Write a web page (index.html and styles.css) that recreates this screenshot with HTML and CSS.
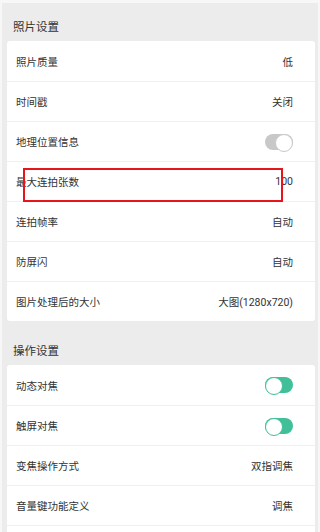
FILE: index.html
```html
<!DOCTYPE html>
<html lang="zh-CN">
<head>
  <meta charset="UTF-8" />
  <meta name="viewport" content="width=device-width, initial-scale=1.0" />
  <title>相机设置</title>
  <link rel="stylesheet" href="styles.css">
</head>
<body>
  <div class="page">
    <div class="group-title">照片设置</div>
    <div class="card">
      <div class="row"><span>照片质量</span><span class="value">低</span></div>
      <div class="row"><span>时间戳</span><span class="value">关闭</span></div>
      <div class="row"><span>地理位置信息</span><span class="switch"></span></div>
      <div class="row"><span>最大连拍张数</span><span class="value">100</span></div>
      <div class="row"><span>连拍帧率</span><span class="value">自动</span></div>
      <div class="row"><span>防屏闪</span><span class="value">自动</span></div>
      <div class="row"><span>图片处理后的大小</span><span class="value">大图(1280x720)</span></div>
    </div>

    <div class="group-title">操作设置</div>
    <div class="card">
      <div class="row"><span>动态对焦</span><span class="switch on"></span></div>
      <div class="row"><span>触屏对焦</span><span class="switch on"></span></div>
      <div class="row"><span>变焦操作方式</span><span class="value">双指调焦</span></div>
      <div class="row"><span>音量键功能定义</span><span class="value">调焦</span></div>
      <div class="row"><span>&nbsp;</span></div>
    </div>
  </div>

  <div class="mark"></div>
</body>
</html>
```

FILE: styles.css
```css
* {
  box-sizing: border-box;
}

body {
  margin: 0;
  height: 532px;
  overflow: hidden;
  background: #f7f7f7;
  font-family: Roboto, "Noto Sans CJK SC", sans-serif;
  color: #333;
}

.page {
  margin: 3px 2px 0;
  padding: 0 3px 0 5px;
  min-height: 529px;
  background: #ececec;
}

.group-title {
  padding: 16px 6px 6px;
  font-size: 11.5px;
  line-height: 16px;
  color: #333;
}

.card {
  margin-bottom: 6px;
  border-radius: 3px;
  background: #fff;
}

.row {
  height: 40px;
  padding: 0 22px 0 9px;
  display: flex;
  align-items: center;
  justify-content: space-between;
  font-size: 10.5px;
  border-top: 1px solid #f0f0f0;
}

.row:first-child {
  border-top: none;
}

.value {
  color: #333;
}

.switch {
  position: relative;
  width: 28px;
  height: 16px;
  border-radius: 8px;
  background: #c8c8c8;
}

.switch::after {
  content: "";
  position: absolute;
  top: 0;
  right: 0;
  width: 16px;
  height: 16px;
  border-radius: 50%;
  background: #fff;
  border: 1px solid #c8c8c8;
}

.switch.on {
  background: #40bf98;
}

.switch.on::after {
  left: 0;
  right: auto;
  border-color: #40bf98;
}

.mark {
  position: absolute;
  left: 23px;
  top: 168px;
  width: 260px;
  height: 34px;
  border: 2px solid #e8141c;
}
```
